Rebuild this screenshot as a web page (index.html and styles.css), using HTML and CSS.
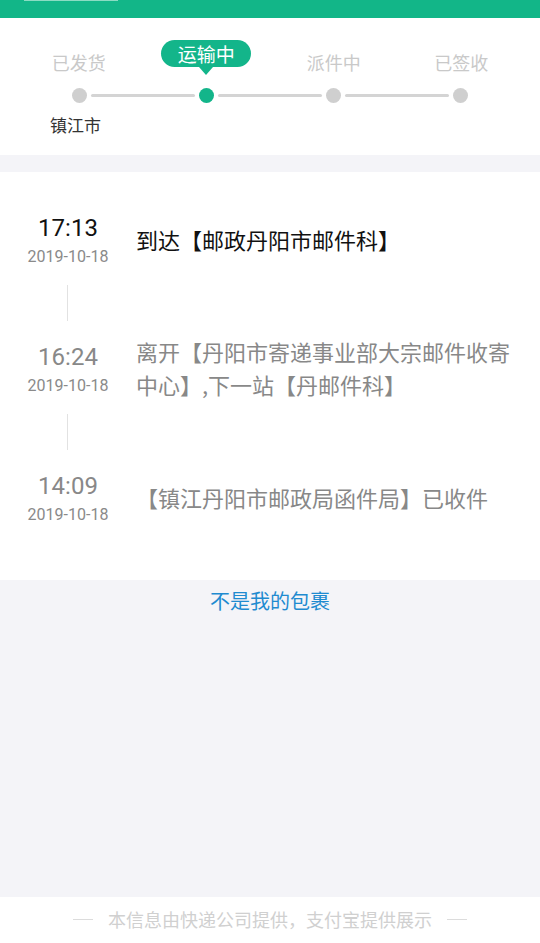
FILE: index.html
```html
<!DOCTYPE html>
<html lang="zh-CN">
<head>
<meta charset="utf-8">
<title>物流详情</title>
<link rel="stylesheet" href="styles.css">
</head>
<body>
<div class="page">
  <div class="topbar"><div class="topbar-btn"></div></div>

  <section class="stepper">
    <div class="labels">
      <div class="label-cell"><span class="label">已发货</span></div>
      <div class="label-cell"><span class="pill">运输中</span></div>
      <div class="label-cell"><span class="label">派件中</span></div>
      <div class="label-cell"><span class="label">已签收</span></div>
    </div>
    <div class="dots">
      <span class="dot"></span><span class="track"></span>
      <span class="dot active"></span><span class="track"></span>
      <span class="dot"></span><span class="track"></span>
      <span class="dot"></span>
    </div>
    <div class="city">镇江市</div>
  </section>

  <section class="timeline">
    <div class="item current">
      <div class="when"><div class="time">17:13</div><div class="date">2019-10-18</div></div>
      <div class="desc">到达【邮政丹阳市邮件科】</div>
    </div>
    <div class="connector"><span class="vline"></span></div>
    <div class="item">
      <div class="when"><div class="time">16:24</div><div class="date">2019-10-18</div></div>
      <div class="desc">离开【丹阳市寄递事业部大宗邮件收寄中心】,下一站【丹邮件科】</div>
    </div>
    <div class="connector"><span class="vline"></span></div>
    <div class="item">
      <div class="when"><div class="time">14:09</div><div class="date">2019-10-18</div></div>
      <div class="desc">【镇江丹阳市邮政局函件局】已收件</div>
    </div>
  </section>

  <div class="rest">
    <a class="notmine">不是我的包裹</a>
  </div>

  <footer class="footer">
    <span class="dash"></span>
    <span class="footer-text">本信息由快递公司提供，支付宝提供展示</span>
    <span class="dash"></span>
  </footer>
</div>
</body>
</html>
```

FILE: styles.css
```css
* { box-sizing: border-box; }
html, body { margin: 0; padding: 0; }
body {
  width: 540px;
  background: #f4f4f8;
  font-family: "Noto Sans CJK SC", Roboto, "Noto Sans", sans-serif;
}
.page {
  height: 943px;
  display: flex;
  flex-direction: column;
}
.topbar {
  height: 18px;
  background: #12b688;
  flex: none;
}
.topbar-btn {
  margin-left: 24px;
  width: 94px;
  height: 1px;
  background: #8adcc3;
}

.stepper {
  background: #fff;
  height: 137px;
  flex: none;
  padding-top: 22px;
}
.labels {
  display: grid;
  grid-template-columns: repeat(4, 1fr);
  padding: 0 15px;
  height: 35px;
}
.label-cell {
  display: flex;
  justify-content: center;
  align-items: flex-end;
}
.label {
  font-size: 18px;
  line-height: 24px;
  color: #c9c9c9;
  margin-bottom: 1px;
}
.pill {
  position: relative;
  display: block;
  width: 90px;
  height: 27px;
  margin-bottom: 8px;
  border-radius: 14px;
  background: #13b58a;
  color: #fff;
  font-size: 19px;
  line-height: 27px;
  text-align: center;
}
.pill::after {
  content: "";
  position: absolute;
  left: 50%;
  bottom: -8px;
  margin-left: -7px;
  border-left: 7px solid transparent;
  border-right: 7px solid transparent;
  border-top: 8px solid #13b58a;
}
.dots {
  display: flex;
  align-items: center;
  padding: 0 71.5px;
  margin-top: 12.5px;
  height: 15px;
}
.dot {
  width: 15px;
  height: 15px;
  border-radius: 50%;
  background: #cfcfcf;
  flex: none;
}
.dot.active { background: #13b58a; }
.track {
  flex: 1;
  height: 3px;
  margin: 0 4px;
  background: #d4d4d4;
  border-radius: 2px;
}
.city {
  margin-top: 10.5px;
  padding-left: 50px;
  font-size: 17px;
  line-height: 24px;
  color: #333;
}

.timeline {
  background: #fff;
  margin-top: 17px;
  padding: 42px 0 55px;
  flex: none;
}
.item {
  display: flex;
  align-items: center;
  height: 53px;
}
.when {
  width: 136px;
  flex: none;
  text-align: center;
  font-family: Roboto, "Noto Sans", sans-serif;
}
.time {
  font-size: 24px;
  line-height: 28px;
  color: #888;
}
.date {
  margin-top: 5px;
  font-size: 16px;
  line-height: 20px;
  color: #8a8a8a;
}
.desc {
  flex: 1;
  margin-top: -3px;
  padding-right: 16px;
  font-size: 22px;
  line-height: 33px;
  color: #888;
}
.item.current .time,
.item.current .desc { color: #111; }
.connector {
  height: 76px;
  padding-top: 18px;
  padding-left: 67px;
}
.vline {
  display: block;
  width: 1px;
  height: 36px;
  background: #e2e2e2;
}

.rest {
  flex: 1;
  text-align: center;
  padding-top: 8px;
}
.notmine {
  font-size: 20px;
  line-height: 26px;
  color: #1f8bd0;
}

.footer {
  height: 46px;
  flex: none;
  background: #fff;
  display: flex;
  align-items: center;
  justify-content: center;
  gap: 15px;
  padding-bottom: 2px;
}
.dash {
  width: 20px;
  height: 1px;
  background: #dcdcdc;
}
.footer-text {
  font-size: 18px;
  line-height: 24px;
  color: #d0d0d0;
}
```
